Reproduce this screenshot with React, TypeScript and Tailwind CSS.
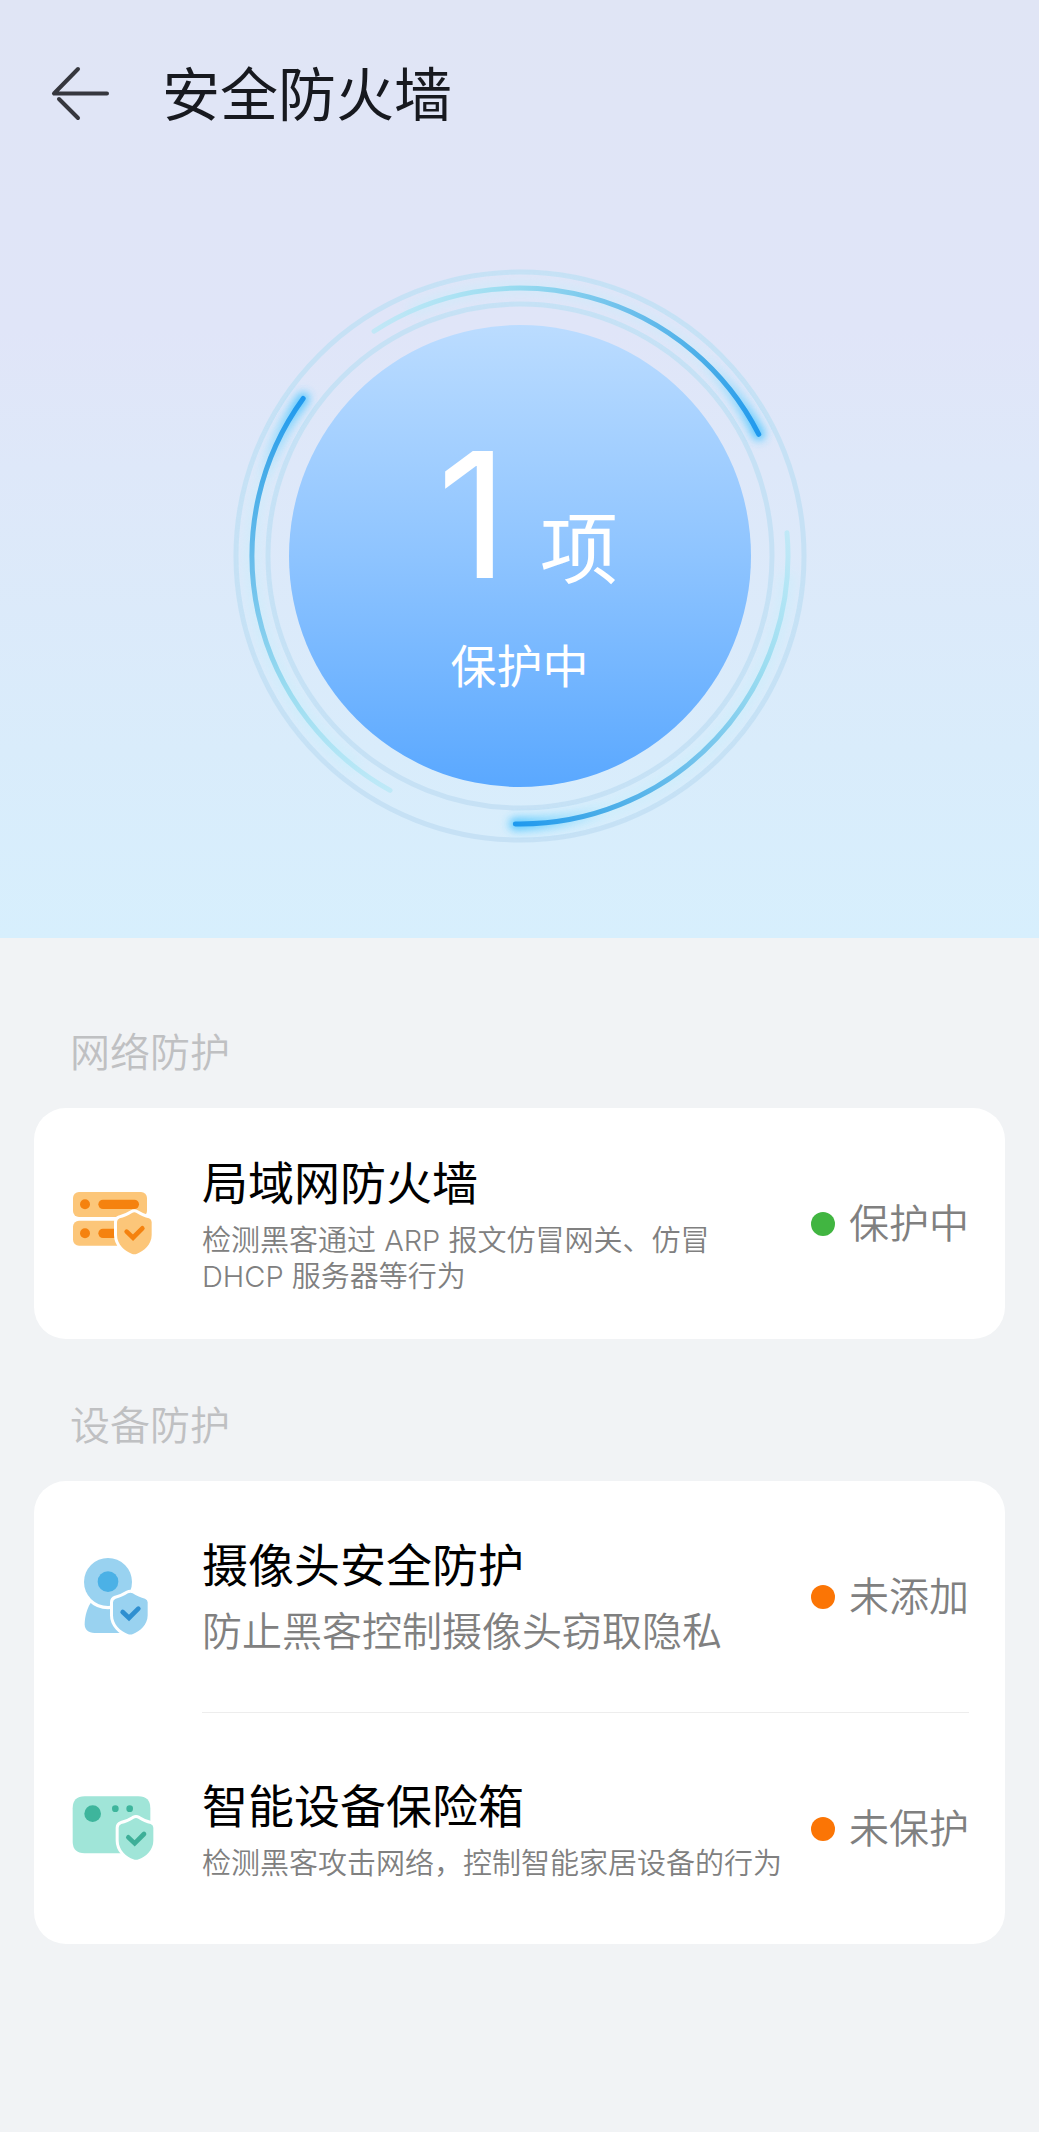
import type { ReactNode } from 'react';

type RowProps = {
  icon: ReactNode;
  title: string;
  desc: string;
  descClass: string;
  status: string;
  dotClass: string;
}

type ShieldProps = {
  x: number;
  y: number;
  fill: string;
  check: string;
}

// Gauge rings share one centre in a 580 x 580 box
const CENTER = 290;
const ARC_RADIUS = 268;

const ARCS = [
  { id: 'arc-top', tail: -123, head: -27 },
  { id: 'arc-right', tail: -5, head: 91 },
  { id: 'arc-left', tail: 119, head: 216 },
];

const polar = (deg: number) => {
  const rad = (deg * Math.PI) / 180;
  return {
    x: CENTER + ARC_RADIUS * Math.cos(rad),
    y: CENTER + ARC_RADIUS * Math.sin(rad),
  };
};

const arcPath = (from: number, to: number) => {
  const a = polar(from);
  const b = polar(to);
  return `M${a.x} ${a.y}A${ARC_RADIUS} ${ARC_RADIUS} 0 0 1 ${b.x} ${b.y}`;
};

const GaugeRings = () => (
  <svg viewBox="0 0 580 580" className="col-start-1 row-start-1 size-[580px] overflow-visible" aria-hidden="true">
    <defs>
      <linearGradient id="disc" x1="0" y1="0" x2="0" y2="1">
        <stop offset="0" stopColor="#bbdcff" />
        <stop offset="0.5" stopColor="#8ec4ff" />
        <stop offset="1" stopColor="#5aa8ff" />
      </linearGradient>
      <filter id="soft" filterUnits="userSpaceOnUse" x="-20" y="-20" width="620" height="620">
        <feGaussianBlur stdDeviation="6" />
      </filter>
      <filter id="glow" filterUnits="userSpaceOnUse" x="-20" y="-20" width="620" height="620">
        <feGaussianBlur stdDeviation="4" />
      </filter>
      {ARCS.map((arc) => {
        const a = polar(arc.tail);
        const b = polar(arc.head);
        const g = polar(arc.head - 20);
        return (
          <g key={arc.id}>
            <linearGradient id={arc.id} gradientUnits="userSpaceOnUse" x1={a.x} y1={a.y} x2={b.x} y2={b.y}>
              <stop offset="0" stopColor="#b4e8f6" stopOpacity="0.7" />
              <stop offset="0.3" stopColor="#9adcf0" />
              <stop offset="0.6" stopColor="#6dc0ec" />
              <stop offset="0.85" stopColor="#45abe8" />
              <stop offset="1" stopColor="#1f99ee" />
            </linearGradient>
            <linearGradient id={`${arc.id}-glow`} gradientUnits="userSpaceOnUse" x1={g.x} y1={g.y} x2={b.x} y2={b.y}>
              <stop offset="0" stopColor="#6fd2ff" stopOpacity="0" />
              <stop offset="1" stopColor="#42c0ff" />
            </linearGradient>
          </g>
        );
      })}
    </defs>

    <circle cx={CENTER} cy={CENTER} r="284" fill="none" stroke="#c6e1f5" strokeWidth="5" />
    <circle cx={CENTER} cy={CENTER} r="252" fill="none" stroke="#c6e1f5" strokeWidth="5" />

    {ARCS.map((arc) => (
      <g key={arc.id} fill="none" strokeLinecap="round">
        <path d={arcPath(arc.tail + 10, arc.head)} stroke="#c2effc" strokeWidth="16" opacity="0.4" filter="url(#soft)" />
        <path d={arcPath(arc.head - 20, arc.head)} stroke={`url(#${arc.id}-glow)`} strokeWidth="12" opacity="0.85" filter="url(#glow)" />
        <path d={arcPath(arc.tail, arc.head)} stroke={`url(#${arc.id})`} strokeWidth="5" />
      </g>
    ))}

    <circle cx={CENTER} cy={CENTER} r="231" fill="url(#disc)" />
  </svg>
);

const Shield = ({ x, y, fill, check }: ShieldProps) => (
  <g transform={`translate(${x} ${y})`}>
    <path
      d="M-7 -60Q0 -64 7 -60C18 -53 32 -47 44 -44Q52 -41 52 -33V6C52 34 28 55 8 62Q0 65 -8 62C-28 55 -52 34 -52 6V-33Q-52 -41 -44 -44C-32 -47 -18 -53 -7 -60Z"
      fill={fill}
      stroke="#fff"
      strokeWidth="18"
      paintOrder="stroke"
    />
    <path d="M-23 -4L-4 14L24 -14" fill="none" stroke={check} strokeWidth="14" strokeLinecap="round" />
  </g>
);

const ServerIcon = () => (
  <svg viewBox="0 0 330 330" className="size-[110px] shrink-0" aria-hidden="true">
    <g transform="translate(0 33)">
      <rect x="39" y="36" width="222" height="75" rx="18" fill="#fcc679" />
      <rect x="39" y="122" width="180" height="75" rx="18" fill="#fcc679" />
      <circle cx="75" cy="73" r="15" fill="#f5820f" />
      <circle cx="75" cy="160" r="15" fill="#f5820f" />
      <rect x="115" y="59" width="122" height="28" rx="14" fill="#f5820f" />
      <rect x="115" y="146" width="90" height="28" rx="14" fill="#f5820f" />
      <Shield x={223} y={159} fill="#fcc679" check="#f5820f" />
    </g>
  </svg>
);

const CameraIcon = () => (
  <svg viewBox="0 0 330 330" className="size-[110px] shrink-0" aria-hidden="true">
    <g transform="translate(0 -3)">
      <path d="M96 180H190V276H104C84 276 74 266 74 250C74 226 82 198 96 180Z" fill="#99d2f0" />
      <circle cx="144" cy="123" r="72" fill="#99d2f0" stroke="#fff" strokeWidth="20" paintOrder="stroke" />
      <circle cx="144" cy="122" r="31" fill="#4bb1e6" />
      <Shield x={211} y={217} fill="#99d2f0" check="#2f8fd0" />
    </g>
  </svg>
);

const SafeBoxIcon = () => (
  <svg viewBox="0 0 330 330" className="size-[110px] shrink-0" aria-hidden="true">
    <g transform="translate(0 21)">
      <path d="M74 46H235Q271 46 271 82V140L200 217H74Q38 217 38 181V82Q38 46 74 46Z" fill="#a0e5d8" />
      <circle cx="98" cy="98" r="25" fill="#3eb59c" />
      <circle cx="166" cy="83" r="10" fill="#3eb59c" />
      <circle cx="209" cy="83" r="10" fill="#3eb59c" />
      <Shield x={228} y={173} fill="#a0e5d8" check="#3eaf98" />
    </g>
  </svg>
);

const ProtectionRow = ({ icon, title, desc, descClass, status, dotClass }: RowProps) => (
  <button type="button" className="flex min-h-[231px] w-full items-center pr-9 pl-[26px] text-left">
    {icon}
    <span className="ml-8 flex min-w-0 flex-1 flex-col gap-[10px]">
      <span className="text-[46px] leading-[60px] text-black">{title}</span>
      <span className={descClass}>{desc}</span>
    </span>
    <span className="ml-7 flex shrink-0 items-center gap-[14px]">
      <span className={`size-6 rounded-full ${dotClass}`} />
      <span className="text-[40px] leading-[54px] font-[350] text-[#808080]">{status}</span>
    </span>
  </button>
);

const App = () => {
  return (
    <div className="min-h-screen bg-[#f1f3f5] font-[Inter,'Noto_Sans_CJK_SC',sans-serif]">
      {/* Hero */}
      <div className="bg-[linear-gradient(180deg,#e0e5f5_0%,#e0e5f8_35%,#dee8f9_50%,#d9ecfb_80%,#d7effd_100%)] pb-[92px]">
        <header className="flex items-center gap-[52px] px-[50px] pt-[55px]">
          <button type="button" aria-label="返回" className="shrink-0">
            <svg viewBox="0 0 60 60" className="size-[60px]" fill="none" stroke="#36373e" strokeWidth="4" strokeLinecap="round" strokeLinejoin="round">
              <path d="M28 4L4 28.500H57M9 34L28 53" />
            </svg>
          </button>
          <h1 className="text-[58px] leading-[80px] text-[#17191f]">安全防火墙</h1>
        </header>

        {/* Status gauge */}
        <div className="mt-[131px] grid place-items-center">
          <GaugeRings />
          <div className="col-start-1 row-start-1 flex flex-col items-center gap-8 pt-2 text-white">
            <p className="flex items-baseline gap-8 pl-4">
              <span className="text-[175px] leading-[180px]">1</span>
              <span className="text-[78px] leading-[80px]">项</span>
            </p>
            <p className="text-[46px] leading-[60px]">保护中</p>
          </div>
        </div>
      </div>

      {/* Protection lists */}
      <main className="px-[34px] pt-[88px] pb-16">
        <section>
          <h2 className="px-9 text-[40px] leading-[54px] font-[350] text-[#bfc0c2]">网络防护</h2>
          <div className="mt-7 rounded-[32px] bg-white">
            <ProtectionRow
              icon={<ServerIcon />}
              title="局域网防火墙"
              desc="检测黑客通过 ARP 报文仿冒网关、仿冒 DHCP 服务器等行为"
              descClass="text-[29px] leading-9 font-[350] text-[#808080]"
              status="保护中"
              dotClass="bg-[#41b541]"
            />
          </div>
        </section>

        <section className="mt-[60px]">
          <h2 className="px-9 text-[40px] leading-[54px] font-[350] text-[#bfc0c2]">设备防护</h2>
          <div className="mt-7 rounded-[32px] bg-white">
            <ProtectionRow
              icon={<CameraIcon />}
              title="摄像头安全防护"
              desc="防止黑客控制摄像头窃取隐私"
              descClass="text-[40px] leading-[54px] font-[350] text-[#808080]"
              status="未添加"
              dotClass="bg-[#fb7505]"
            />
            <hr className="mr-9 ml-[168px] border-[#ededed]" />
            <ProtectionRow
              icon={<SafeBoxIcon />}
              title="智能设备保险箱"
              desc="检测黑客攻击网络，控制智能家居设备的行为"
              descClass="text-[29px] leading-9 font-[350] text-[#808080]"
              status="未保护"
              dotClass="bg-[#fb7505]"
            />
          </div>
        </section>
      </main>
    </div>
  );
};

export default App;
